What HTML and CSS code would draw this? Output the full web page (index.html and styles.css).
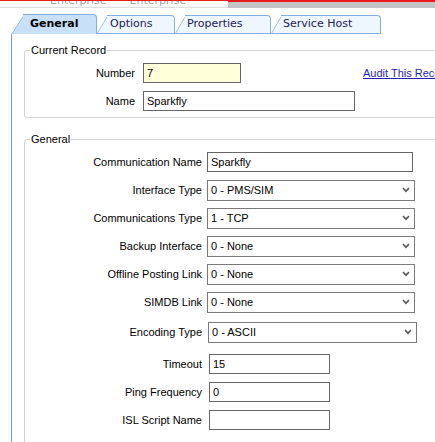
FILE: index.html
```html
<!DOCTYPE html>
<html>
<head>
<meta charset="utf-8">
<link rel="stylesheet" href="styles.css">
</head>
<body>
<div class="top">
  <div class="top-left"><span class="ent">Enterprise</span><span class="ent">Enterprise</span></div>
  <div class="top-right"></div>
</div>
<div class="tabs">
  <div class="tab active t-general">General</div>
  <div class="tab t-options">Options</div>
  <div class="tab t-properties">Properties</div>
  <div class="tab t-service">Service Host</div>
</div>
<div class="panel">
  <fieldset class="group current">
    <legend>Current Record</legend>
    <div class="row cr first">
      <span class="label">Number</span>
      <div class="input yellow num">7</div>
      <a class="audit" href="#">Audit This Record</a>
    </div>
    <div class="row cr">
      <span class="label">Name</span>
      <div class="input name">Sparkfly</div>
    </div>
  </fieldset>
  <fieldset class="group general">
    <legend>General</legend>
    <div class="row gr first">
      <span class="label">Communication Name</span>
      <div class="input wide">Sparkfly</div>
    </div>
    <div class="row gr">
      <span class="label">Interface Type</span>
      <div class="select"><span>0 - PMS/SIM</span><svg width="8" height="6" viewBox="0 0 8 6"><path d="M1 1.2 L4 4.2 L7 1.2" fill="none" stroke="#5f5f5f" stroke-width="1.7"/></svg></div>
    </div>
    <div class="row gr">
      <span class="label">Communications Type</span>
      <div class="select"><span>1 - TCP</span><svg width="8" height="6" viewBox="0 0 8 6"><path d="M1 1.2 L4 4.2 L7 1.2" fill="none" stroke="#5f5f5f" stroke-width="1.7"/></svg></div>
    </div>
    <div class="row gr">
      <span class="label">Backup Interface</span>
      <div class="select"><span>0 - None</span><svg width="8" height="6" viewBox="0 0 8 6"><path d="M1 1.2 L4 4.2 L7 1.2" fill="none" stroke="#5f5f5f" stroke-width="1.7"/></svg></div>
    </div>
    <div class="row gr">
      <span class="label">Offline Posting Link</span>
      <div class="select"><span>0 - None</span><svg width="8" height="6" viewBox="0 0 8 6"><path d="M1 1.2 L4 4.2 L7 1.2" fill="none" stroke="#5f5f5f" stroke-width="1.7"/></svg></div>
    </div>
    <div class="row gr">
      <span class="label">SIMDB Link</span>
      <div class="select"><span>0 - None</span><svg width="8" height="6" viewBox="0 0 8 6"><path d="M1 1.2 L4 4.2 L7 1.2" fill="none" stroke="#5f5f5f" stroke-width="1.7"/></svg></div>
    </div>
    <div class="row gr enc">
      <span class="label">Encoding Type</span>
      <div class="select encsel"><span>0 - ASCII</span><svg width="8" height="6" viewBox="0 0 8 6"><path d="M1 1.2 L4 4.2 L7 1.2" fill="none" stroke="#5f5f5f" stroke-width="1.7"/></svg></div>
    </div>
    <div class="row gr sh first-short">
      <span class="label">Timeout</span>
      <div class="input short">15</div>
    </div>
    <div class="row gr sh">
      <span class="label">Ping Frequency</span>
      <div class="input short">0</div>
    </div>
    <div class="row gr sh">
      <span class="label">ISL Script Name</span>
      <div class="input short"></div>
    </div>
  </fieldset>
</div>
</body>
</html>
```
FILE: styles.css
```css
html, body {
  margin: 0;
  padding: 0;
}
body {
  width: 435px;
  height: 442px;
  overflow: hidden;
  background: #fff;
  font-family: "Liberation Sans", Arial, sans-serif;
  font-size: 11px;
  color: #000;
}

/* top strip */
.top {
  display: flex;
  height: 8px;
}
.top-left {
  width: 228px;
  box-sizing: border-box;
  border-top: 1px solid #e61b1b;
  border-bottom: 1px solid #dedede;
  overflow: hidden;
  display: flex;
  gap: 23px;
  padding-left: 50px;
  font-family: "DejaVu Sans", Verdana, sans-serif;
  font-size: 11px;
  line-height: 13px;
  color: #a3a3a3;
}
.ent {
  margin-top: -7px;
}
.top-right {
  flex: 1;
  border-top: 2px solid #e61b1b;
  background: #c3c3c3;
}

/* tabs */
.tabs {
  display: flex;
  align-items: flex-end;
  height: 20px;
  margin-top: 6px;
  padding-left: 11px;
}
.tab {
  position: relative;
  z-index: 0;
  box-sizing: border-box;
  height: 19px;
  line-height: 18px;
  border-bottom: 1px solid #84aee0;
  padding-left: 12px;
  font-family: "DejaVu Sans", Verdana, sans-serif;
  font-size: 11px;
  color: #20205a;
  white-space: nowrap;
}
.tab::before {
  content: "";
  position: absolute;
  z-index: -1;
  left: 0;
  top: 0;
  bottom: 0;
  width: 26px;
  box-sizing: border-box;
  background: #eef6fe;
  border-left: 1px solid #84aee0;
  border-top: 1px solid #84aee0;
  border-top-left-radius: 3px;
  transform: skewX(-30deg);
  transform-origin: 0 100%;
}
.tab::after {
  content: "";
  position: absolute;
  z-index: -1;
  left: 10px;
  right: 0;
  top: 0;
  bottom: 0;
  box-sizing: border-box;
  background: #eef6fe;
  border-top: 1px solid #84aee0;
  border-right: 1px solid #84aee0;
  border-top-right-radius: 4px;
}
.tab.active {
  height: 20px;
  line-height: 20px;
  border-bottom: none;
  font-weight: bold;
  color: #000;
  padding-left: 19px;
}
.tab.active::before,
.tab.active::after {
  background: #c8e0f8;
}
.tab.active::before {
  transform: skewX(-33deg);
}
.tab.active::after {
  left: 12px;
}
.t-general { width: 86px; }
.t-options { width: 78px; padding-left: 13px; }
.t-properties { width: 96px; }
.t-service { width: 110px; }

/* panel */
.panel {
  margin-left: 11px;
  border-left: 1px solid #6c9fd8;
  padding-left: 12px;
  height: 420px;
  padding-top: 9px;
  box-sizing: border-box;
}
.group {
  margin: 0;
  width: 520px;
  box-sizing: border-box;
  border: 1px solid #d3d3d3;
  border-radius: 3px;
  padding: 6px 0 6px 0;
}
.group legend {
  margin-left: 5px;
  padding: 0 1px;
  line-height: 14px;
  font-size: 11px;
}
.general {
  margin-top: 14px;
  padding-bottom: 40px;
}

.row {
  display: flex;
  align-items: center;
  height: 20px;
  margin-top: 8px;
}
.row.first {
  margin-top: 0;
}
.label {
  text-align: right;
  white-space: nowrap;
}
.cr .label {
  width: 110px;
  margin-right: 8px;
}
.gr .label {
  width: 177px;
  margin-right: 5px;
}
.row.enc {
  margin-top: 10px;
}
.row.first-short {
  margin-top: 12px;
}

.input {
  box-sizing: border-box;
  height: 20px;
  border: 1px solid #666;
  padding-left: 3px;
  line-height: 18px;
  white-space: nowrap;
  overflow: hidden;
  background: #fff;
}
.yellow {
  background: #ffffd9;
}
.num { width: 98px; }
.name { width: 212px; }
.wide { width: 206px; }
.short {
  width: 121px;
  margin-left: 2px;
}
.audit {
  margin-left: 122px;
  color: #1f1fb4;
  text-decoration: underline;
  white-space: nowrap;
}

.select {
  box-sizing: border-box;
  height: 21px;
  width: 208px;
  border: 1px solid #7a7a7a;
  display: flex;
  align-items: center;
  justify-content: space-between;
  padding: 0 4px 0 3px;
  white-space: nowrap;
}
.select svg {
  display: block;
}
.encsel {
  width: 209px;
  margin-left: 1px;
}
```
